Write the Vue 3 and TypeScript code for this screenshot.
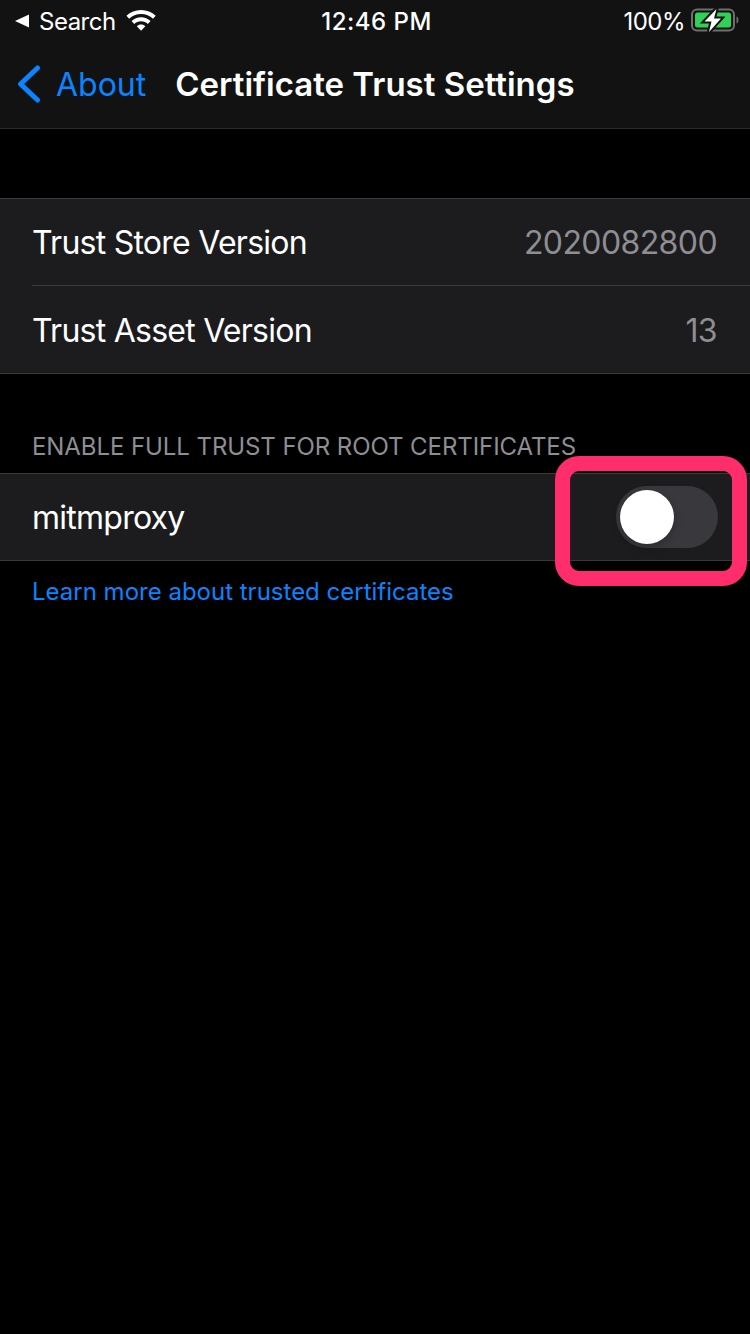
<script setup lang="ts">
const versions = [
  { label: 'Trust Store Version', value: '2020082800' },
  { label: 'Trust Asset Version', value: '13' },
]
</script>

<template>
  <div class="screen">
    <header class="top-bar">
      <div class="status-bar">
        <div class="status-left">
          <svg class="back-arrow" width="16" height="16" viewBox="0 0 16 16">
            <path d="M15 1.500v13L1 8z" fill="#fff" />
          </svg>
          <span class="status-search">Search</span>
          <svg class="wifi" width="32" height="24" viewBox="0 2.500 30 22.500">
            <path d="M16 3.500c5.300 0 10.100 2 13.700 5.400l-2.500 2.700C24.300 8.900 20.300 7.200 16 7.200S7.700 8.900 4.800 11.600L2.300 8.900C5.900 5.500 10.700 3.500 16 3.500z" fill="#fff" />
            <path d="M16 10.300c3.400 0 6.500 1.300 8.900 3.500l-2.500 2.700c-1.700-1.600-3.900-2.500-6.400-2.500s-4.700.9-6.400 2.500l-2.500-2.700c2.400-2.200 5.500-3.500 8.900-3.500z" fill="#fff" />
            <path d="M16 17c1.500 0 2.900.6 4 1.600L16 23l-4-4.400c1.100-1 2.500-1.600 4-1.600z" fill="#fff" />
          </svg>
        </div>
        <span class="status-time">12:46 PM</span>
        <div class="status-right">
          <span class="status-battery">100%</span>
          <svg class="battery" width="48" height="24" viewBox="0 0 48 24">
            <rect x="1" y="1.500" width="42" height="21" rx="5" fill="none" stroke="#6e6e70" stroke-width="2" />
            <rect x="4" y="4.500" width="36" height="15" rx="2.500" fill="#30d158" />
            <path d="M45.500 8.500c1.500.5 2 2 2 3.500s-.5 3-2 3.500z" fill="#6e6e70" />
            <path d="M25.500 1 13.500 13.500h7L18 24 30 10.500h-7z" fill="#fff" stroke="#121212" stroke-width="4" paint-order="stroke" />
          </svg>
        </div>
      </div>
      <nav class="nav-bar">
        <svg class="chevron" width="26" height="40" viewBox="0 0 26 40">
          <path d="M22.500 4 5.500 20l17 16" fill="none" stroke="#0a84ff" stroke-width="5" stroke-linecap="round" stroke-linejoin="round" />
        </svg>
        <span class="nav-back">About</span>
        <h1 class="nav-title">Certificate Trust Settings</h1>
      </nav>
    </header>

    <section class="group first-group">
      <div v-for="v in versions" :key="v.label" class="row">
        <span class="row-label">{{ v.label }}</span>
        <span class="row-value">{{ v.value }}</span>
      </div>
    </section>

    <p class="group-header">ENABLE FULL TRUST FOR ROOT CERTIFICATES</p>
    <section class="group">
      <div class="row">
        <span class="row-label">mitmproxy</span>
        <div class="toggle"><div class="toggle-knob"></div></div>
      </div>
    </section>
    <p class="group-footer">Learn more about trusted certificates</p>

    <div class="highlight"></div>
  </div>
</template>

<style>
html,
body {
  background: #000;
}
</style>

<style scoped>
.screen {
  position: relative;
  width: 750px;
  height: 1334px;
  overflow: hidden;
  background: #000;
  font-family: Inter, 'Liberation Sans', sans-serif;
  color: #fff;
}

.top-bar {
  height: 129px;
  box-sizing: border-box;
  background: #121212;
  border-bottom: 1px solid #2a2a2c;
}

.status-bar {
  display: grid;
  grid-template-columns: 1fr auto 1fr;
  align-items: center;
  height: 42px;
  padding: 0 11px 0 14px;
  font-size: 24px;
}

.status-left {
  display: flex;
  align-items: center;
}

.back-arrow {
  margin-right: 9px;
}

.status-search {
  letter-spacing: -0.5px;
}

.wifi {
  margin-left: 8px;
}

.status-time {
  font-weight: 500;
  letter-spacing: 0.5px;
}

.status-right {
  display: flex;
  align-items: center;
  justify-content: flex-end;
  gap: 6px;
}

.status-battery {
  letter-spacing: -0.5px;
}

.battery {
  margin-bottom: 3px;
  overflow: visible;
}

.nav-bar {
  display: flex;
  align-items: center;
  height: 84px;
  padding: 0 0 2px 15px;
}

.chevron {
  flex-shrink: 0;
}

.nav-back {
  margin-left: 15px;
  font-size: 32px;
  color: #0a84ff;
}

.nav-title {
  margin: 0 0 0 29px;
  font-size: 33px;
  font-weight: 600;
}

.group {
  background: #1c1c1e;
  border-top: 1px solid #3a3a3c;
  border-bottom: 1px solid #3a3a3c;
}

.first-group {
  margin-top: 69px;
}

.row {
  display: flex;
  align-items: center;
  justify-content: space-between;
  height: 86px;
  margin-left: 32px;
  padding-right: 32px;
  font-size: 32px;
}

.row + .row {
  height: 86px;
  padding-top: 1px;
  border-top: 1px solid #3a3a3c;
}

.row-label {
  letter-spacing: -0.75px;
}

.row-value {
  margin-right: 1px;
  color: #8e8e93;
  letter-spacing: -0.6px;
}

.group-header {
  margin: 60px 0 13px 32px;
  font-size: 24px;
  line-height: 26px;
  color: #8e8e93;
  letter-spacing: -0.08px;
}

.group-footer {
  margin: 17px 0 0 32px;
  font-size: 24px;
  line-height: 28px;
  color: #0a84ff;
}

.toggle {
  display: flex;
  align-items: center;
  width: 102px;
  height: 62px;
  padding-left: 4px;
  box-sizing: border-box;
  border-radius: 31px;
  background: #39393d;
}

.toggle-knob {
  width: 54px;
  height: 54px;
  border-radius: 50%;
  background: #fff;
  box-shadow: 0 3px 8px rgba(0, 0, 0, 0.25);
}

.highlight {
  position: absolute;
  left: 555px;
  top: 456px;
  width: 192px;
  height: 130px;
  box-sizing: border-box;
  border: 15px solid #ff2d6b;
  border-radius: 24px;
}
</style>
